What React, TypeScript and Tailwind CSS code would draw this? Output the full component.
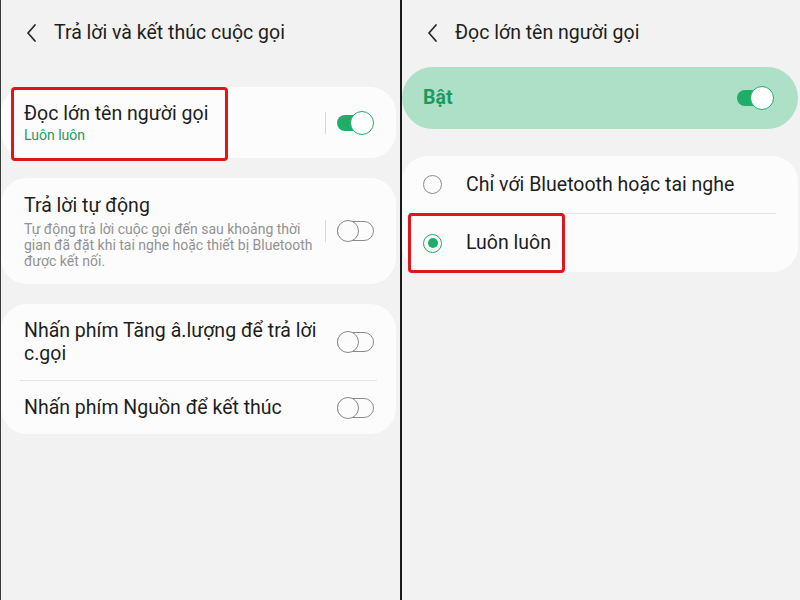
import React from "react";

const font = { fontFamily: "Roboto, 'Noto Sans', sans-serif" };

function Chevron() {
  return (
    <svg width="14" height="20" viewBox="0 0 14 20" className="shrink-0">
      <path d="M10 2 L3 10 L10 18" fill="none" stroke="#2a2a2a" strokeWidth="1.8" strokeLinecap="round" strokeLinejoin="round" />
    </svg>
  );
}

function ToggleOn() {
  return (
    <div className="relative w-[37px] h-[24px] shrink-0">
      <div className="absolute left-0 top-[4px] w-[34px] h-[16px] rounded-full bg-[#1fad67]" />
      <div className="absolute right-0 top-0 w-[24px] h-[24px] rounded-full bg-white border-[1.5px] border-[#1fad67]" />
    </div>
  );
}

function ToggleOff() {
  return (
    <div className="relative w-[37px] h-[22px] shrink-0">
      <div className="absolute left-0 top-[1px] w-[37px] h-[20px] rounded-full border-[1.5px] border-[#8a8a8a]" />
      <div className="absolute left-0 top-0 w-[22px] h-[22px] rounded-full bg-[#fcfcfc] border-[1.5px] border-[#8a8a8a]" />
    </div>
  );
}

function VDivider() {
  return <div className="w-px h-[22px] bg-[#d8d8d8] shrink-0" />;
}

function Header({ title }: { title: string }) {
  return (
    <div className="h-[66px] flex items-center pl-[24px] gap-[15px]">
      <Chevron />
      <span className="text-[19.5px] text-[#1e1e1e]">{title}</span>
    </div>
  );
}

export default function App() {
  return (
    <div className="w-[800px] h-[600px] flex bg-[#f2f2f2] overflow-hidden" style={font}>
      {/* Left panel */}
      <div className="w-[400px] h-full border-l border-[#3a3a3a] flex flex-col">
        <Header title="Trả lời và kết thúc cuộc gọi" />
        <div className="mt-[21px] mr-[4px] flex flex-col gap-[20px]">
          {/* Card 1 */}
          <div className="relative h-[71px] rounded-[26px] bg-[#fcfcfc] flex items-center pl-[23px] pr-[22px]">
            <div className="flex-1 flex flex-col">
              <span className="text-[19.5px] leading-[24px] text-[#1e1e1e]">Đọc lớn tên người gọi</span>
              <span className="text-[14px] leading-[18px] text-[#1d9b61]">Luôn luôn</span>
            </div>
            <div className="flex items-center gap-[11px]">
              <VDivider />
              <ToggleOn />
            </div>
            <div className="absolute left-[10px] top-0 w-[217px] h-[74px] border-[3px] border-[#e0161c] rounded-[4px]" />
          </div>
          {/* Card 2 */}
          <div className="h-[106px] rounded-[26px] bg-[#fcfcfc] flex items-center pl-[23px] pr-[22px]">
            <div className="flex-1 flex flex-col">
              <span className="text-[19.5px] leading-[24px] text-[#1e1e1e]">Trả lời tự động</span>
              <span className="text-[14px] leading-[16px] text-[#929292] mt-[3px] w-[295px]">
                Tự động trả lời cuộc gọi đến sau khoảng thời gian đã đặt khi tai nghe hoặc thiết bị Bluetooth được kết nối.
              </span>
            </div>
            <div className="flex items-center gap-[11px]">
              <VDivider />
              <ToggleOff />
            </div>
          </div>
          {/* Card 3 */}
          <div className="rounded-[26px] bg-[#fcfcfc] flex flex-col">
            <div className="h-[76px] flex items-center pl-[23px] pr-[22px]">
              <span className="flex-1 text-[19.5px] leading-[23px] text-[#1e1e1e] pr-[20px]">
                Nhấn phím Tăng â.lượng để trả lời c.gọi
              </span>
              <ToggleOff />
            </div>
            <div className="mx-[19px] h-px bg-[#e4e4e4]" />
            <div className="h-[53px] flex items-center pl-[23px] pr-[22px]">
              <span className="flex-1 text-[19.5px] text-[#1e1e1e]">Nhấn phím Nguồn để kết thúc</span>
              <ToggleOff />
            </div>
          </div>
        </div>
      </div>
      {/* Divider */}
      <div className="w-[2px] h-full bg-[#1a1a1a]" />
      {/* Right panel */}
      <div className="flex-1 h-full flex flex-col">
        <Header title="Đọc lớn tên người gọi" />
        <div className="mt-[1px] mr-[2px] h-[62px] rounded-[31px] bg-[#ade0c7] flex items-center pl-[21px] pr-[24px]">
          <span className="flex-1 text-[19.5px] font-bold text-[#1d9a60]">Bật</span>
          <ToggleOn />
        </div>
        <div className="mt-[27px] mr-[2px] rounded-[26px] bg-[#fcfcfc] flex flex-col">
          <div className="h-[57px] flex items-center pl-[21px]">
            <div className="w-[19px] h-[19px] rounded-full border-[1.5px] border-[#8c8c8c]" />
            <span className="ml-[24px] text-[19.5px] text-[#1e1e1e]">Chỉ với Bluetooth hoặc tai nghe</span>
          </div>
          <div className="ml-[7px] mr-[22px] h-px bg-[#e4e4e4]" />
          <div className="relative h-[58px] flex items-center pl-[21px]">
            <div className="w-[19px] h-[19px] rounded-full border-[1.5px] border-[#1fad67] flex items-center justify-center">
              <div className="w-[10px] h-[10px] rounded-full bg-[#1fad67]" />
            </div>
            <span className="ml-[24px] text-[19.5px] text-[#1e1e1e]">Luôn luôn</span>
            <div className="absolute left-[6px] top-[-1px] w-[157px] h-[60px] border-[3px] border-[#e0161c] rounded-[4px]" />
          </div>
        </div>
      </div>
    </div>
  );
}
